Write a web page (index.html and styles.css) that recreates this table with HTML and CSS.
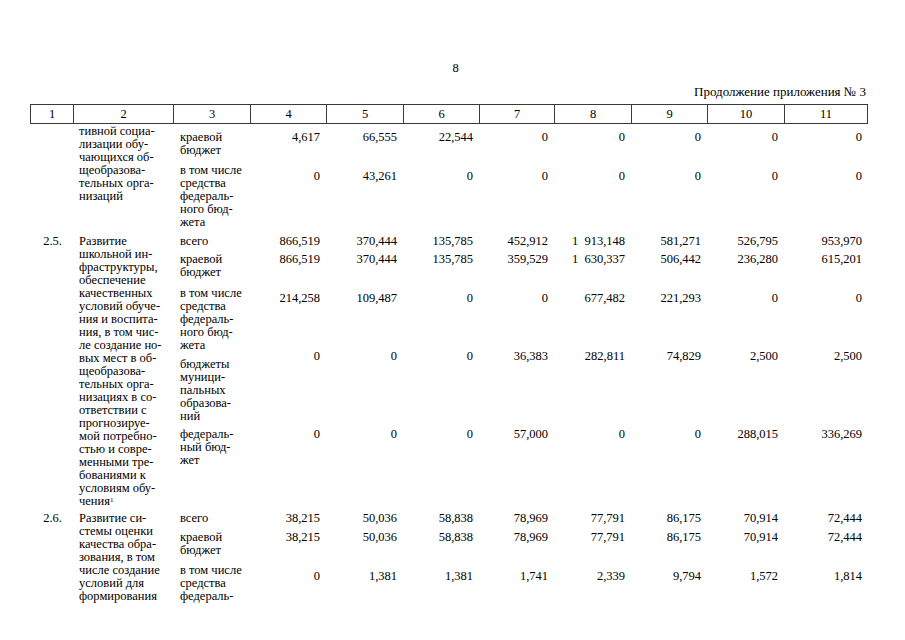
FILE: index.html
```html
<!DOCTYPE html>
<html lang="ru">
<head>
<meta charset="utf-8">
<title>Продолжение приложения № 3</title>
<link rel="stylesheet" href="styles.css">
</head>
<body>
<div class="page">
  <div class="pagenum">8</div>
  <div class="cont">Продолжение приложения № 3</div>

  <div class="thead">
    <div class="th">1</div><div class="th">2</div><div class="th">3</div><div class="th">4</div><div class="th">5</div><div class="th">6</div><div class="th">7</div><div class="th">8</div><div class="th">9</div><div class="th">10</div><div class="th">11</div>
  </div>

  <div class="tbody">
    <div class="block first">
      <div class="c1"></div>
      <div class="c2">тивной социа-<br>лизации обу-<br>чающихся об-<br>щеобразова-<br>тельных орга-<br>низаций</div>
      <div class="rows">
        <div class="row">
          <div class="lbl">краевой<br>бюджет</div>
          <div class="n">4,617</div><div class="n">66,555</div><div class="n">22,544</div><div class="n">0</div><div class="n">0</div><div class="n">0</div><div class="n">0</div><div class="n">0</div>
        </div>
        <div class="row g7 off6">
          <div class="lbl">в том числе<br>средства<br>федераль-<br>ного бюд-<br>жета</div>
          <div class="n">0</div><div class="n">43,261</div><div class="n">0</div><div class="n">0</div><div class="n">0</div><div class="n">0</div><div class="n">0</div><div class="n">0</div>
        </div>
      </div>
    </div>

    <div class="block b25">
      <div class="c1">2.5.</div>
      <div class="c2">Развитие<br>школьной ин-<br>фраструктуры,<br>обеспечение<br>качественных<br>условий обуче-<br>ния и воспита-<br>ния, в том чис-<br>ле создание но-<br>вых мест в об-<br>щеобразова-<br>тельных орга-<br>низациях в со-<br>ответствии с<br>прогнозируе-<br>мой потребно-<br>стью и совре-<br>менными тре-<br>бованиями к<br>условиям обу-<br>чения<sup class="fn">1</sup></div>
      <div class="rows">
        <div class="row">
          <div class="lbl">всего</div>
          <div class="n">866,519</div><div class="n">370,444</div><div class="n">135,785</div><div class="n">452,912</div><div class="n">1&#8199;913,148</div><div class="n">581,271</div><div class="n">526,795</div><div class="n">953,970</div>
        </div>
        <div class="row g5">
          <div class="lbl">краевой<br>бюджет</div>
          <div class="n">866,519</div><div class="n">370,444</div><div class="n">135,785</div><div class="n">359,529</div><div class="n">1&#8199;630,337</div><div class="n">506,442</div><div class="n">236,280</div><div class="n">615,201</div>
        </div>
        <div class="row g8 off5">
          <div class="lbl">в том числе<br>средства<br>федераль-<br>ного бюд-<br>жета</div>
          <div class="n">214,258</div><div class="n">109,487</div><div class="n">0</div><div class="n">0</div><div class="n">677,482</div><div class="n">221,293</div><div class="n">0</div><div class="n">0</div>
        </div>
        <div class="row g6 up8">
          <div class="lbl">бюджеты<br>муници-<br>пальных<br>образова-<br>ний</div>
          <div class="n">0</div><div class="n">0</div><div class="n">0</div><div class="n">36,383</div><div class="n">282,811</div><div class="n">74,829</div><div class="n">2,500</div><div class="n">2,500</div>
        </div>
        <div class="row g5">
          <div class="lbl">федераль-<br>ный бюд-<br>жет</div>
          <div class="n">0</div><div class="n">0</div><div class="n">0</div><div class="n">57,000</div><div class="n">0</div><div class="n">0</div><div class="n">288,015</div><div class="n">336,269</div>
        </div>
      </div>
    </div>

    <div class="block b26">
      <div class="c1">2.6.</div>
      <div class="c2">Развитие си-<br>стемы оценки<br>качества обра-<br>зования, в том<br>числе создание<br>условий для<br>формирования</div>
      <div class="rows">
        <div class="row">
          <div class="lbl">всего</div>
          <div class="n">38,215</div><div class="n">50,036</div><div class="n">58,838</div><div class="n">78,969</div><div class="n">77,791</div><div class="n">86,175</div><div class="n">70,914</div><div class="n">72,444</div>
        </div>
        <div class="row g6">
          <div class="lbl">краевой<br>бюджет</div>
          <div class="n">38,215</div><div class="n">50,036</div><div class="n">58,838</div><div class="n">78,969</div><div class="n">77,791</div><div class="n">86,175</div><div class="n">70,914</div><div class="n">72,444</div>
        </div>
        <div class="row g7 off6">
          <div class="lbl">в том числе<br>средства<br>федераль-</div>
          <div class="n">0</div><div class="n">1,381</div><div class="n">1,381</div><div class="n">1,741</div><div class="n">2,339</div><div class="n">9,794</div><div class="n">1,572</div><div class="n">1,814</div>
        </div>
      </div>
    </div>
  </div>
</div>
</body>
</html>
```

FILE: styles.css
```css
html, body {
  margin: 0;
  padding: 0;
  background: #ffffff;
}

body {
  font-family: "Liberation Serif", "Times New Roman", serif;
  font-size: 12.5px;
  line-height: 13px;
  color: #000000;
  width: 905px;
  height: 640px;
  overflow: hidden;
}

.page {
  margin-left: 30px;
  width: 838px;
}

.pagenum {
  margin-top: 62px;
  height: 13px;
  text-align: center;
  padding-left: 13px;
}

.cont {
  margin-top: 10px;
  text-align: right;
  padding-right: 2px;
  font-size: 13px;
}

.thead {
  margin-top: 6px;
  display: grid;
  grid-template-columns: 43px 100px 77px 76px 77px 76px 75px 77px 76px 77px 83px;
  border-top: 1px solid #3a3a3a;
  border-bottom: 1px solid #3a3a3a;
  border-left: 1px solid #3a3a3a;
}

.th {
  box-sizing: border-box;
  height: 18px;
  line-height: 18px;
  text-align: center;
  border-right: 1px solid #3a3a3a;
}

.tbody {
  padding-left: 1px;
}

.block {
  display: flex;
  align-items: flex-start;
}

.block.b25 {
  margin-top: 6px;
}

.block.b26 {
  margin-top: 4px;
}

.c1 {
  width: 43px;
  flex: none;
  text-align: center;
  white-space: nowrap;
}

.c2 {
  width: 100px;
  box-sizing: border-box;
  flex: none;
  padding-left: 5px;
  white-space: nowrap;
}

.block.first .c2 {
  padding-top: 1px;
}

.block.first .rows {
  padding-top: 7px;
}

.rows {
  width: 694px;
  flex: none;
  display: flex;
  flex-direction: column;
}

.row {
  display: grid;
  grid-template-columns: 77px 76px 77px 76px 75px 77px 76px 77px 83px;
  align-items: start;
}

.row.g5 { margin-top: 5px; }
.row.g6 { margin-top: 6px; }
.row.g7 { margin-top: 7px; }
.row.g8 { margin-top: 8px; }

.row.off5 .n { padding-top: 5px; }
.row.off6 .n { padding-top: 6px; }
.row.up8 .n { margin-top: -8px; }

.lbl {
  padding-left: 6px;
  white-space: nowrap;
}

.n {
  text-align: right;
  padding-right: 7px;
  white-space: nowrap;
}

.n:last-child {
  padding-right: 6px;
}

.fn {
  font-size: 7px;
  line-height: 0;
  vertical-align: 3px;
}
```
